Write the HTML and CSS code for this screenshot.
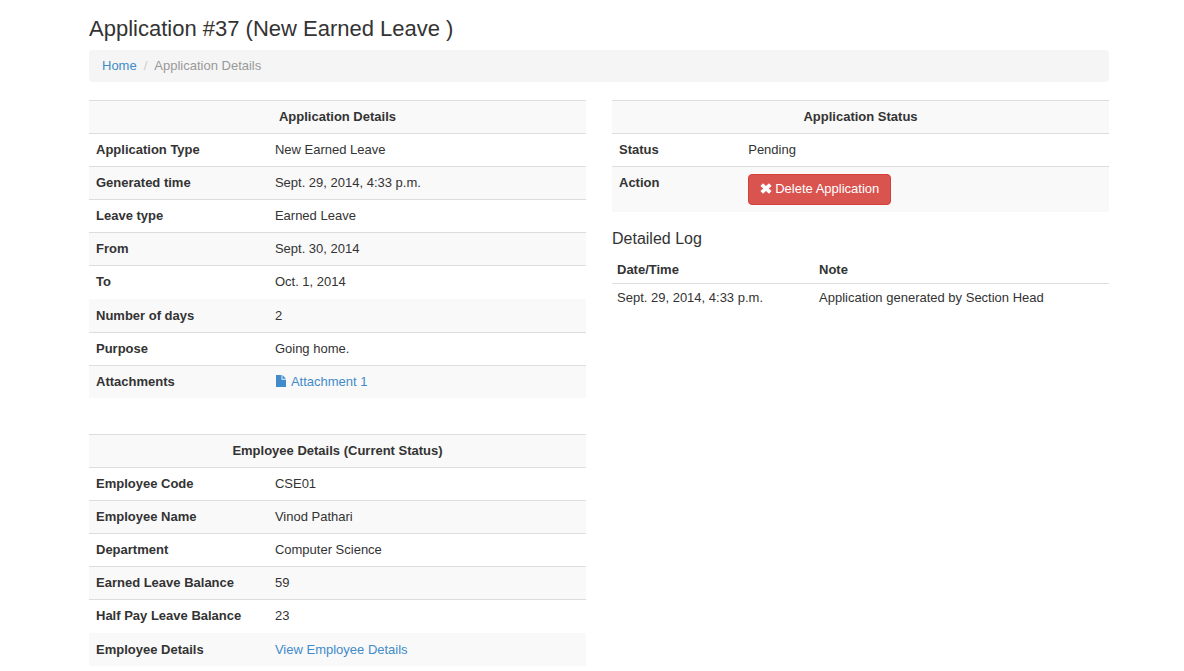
FILE: index.html
```html
<!DOCTYPE html>
<html lang="en">
<head>
<meta charset="utf-8">
<meta name="viewport" content="width=device-width, initial-scale=1">
<title>Application #37</title>
<link rel="stylesheet" href="styles.css">
</head>
<body>
<main class="container">
  <h1 class="page-title">Application #37 (New Earned Leave )</h1>
  <nav aria-label="Breadcrumb">
    <ol class="breadcrumb">
      <li><a href="#">Home</a></li>
      <li class="active">Application Details</li>
    </ol>
  </nav>
  <div class="columns">
    <div class="column">
      <table class="details">
        <thead><tr><th colspan="2">Application Details</th></tr></thead>
        <tbody>
          <tr><th scope="row">Application Type</th><td>New Earned Leave</td></tr>
          <tr><th scope="row">Generated time</th><td>Sept. 29, 2014, 4:33 p.m.</td></tr>
          <tr><th scope="row">Leave type</th><td>Earned Leave</td></tr>
          <tr><th scope="row">From</th><td>Sept. 30, 2014</td></tr>
          <tr><th scope="row">To</th><td>Oct. 1, 2014</td></tr>
          <tr class="no-rule"><th scope="row">Number of days</th><td>2</td></tr>
          <tr><th scope="row">Purpose</th><td>Going home.</td></tr>
          <tr><th scope="row">Attachments</th><td><a href="#"><svg class="icon-file" viewBox="0 0 10 12" aria-hidden="true"><path fill="currentColor" d="M0 0h5.5v4.7H10V12H0zM6.4 0 10 3.8H6.4z"/></svg>Attachment 1</a></td></tr>
        </tbody>
      </table>
      <table class="details">
        <thead><tr><th colspan="2">Employee Details (Current Status)</th></tr></thead>
        <tbody>
          <tr><th scope="row">Employee Code</th><td>CSE01</td></tr>
          <tr><th scope="row">Employee Name</th><td>Vinod Pathari</td></tr>
          <tr><th scope="row">Department</th><td>Computer Science</td></tr>
          <tr><th scope="row">Earned Leave Balance</th><td>59</td></tr>
          <tr><th scope="row">Half Pay Leave Balance</th><td>23</td></tr>
          <tr class="no-rule"><th scope="row">Employee Details</th><td><a href="#">View Employee Details</a></td></tr>
        </tbody>
      </table>
    </div>
    <div class="column">
      <table class="details status">
        <thead><tr><th colspan="2">Application Status</th></tr></thead>
        <tbody>
          <tr><th scope="row">Status</th><td>Pending</td></tr>
          <tr><th scope="row">Action</th><td><button class="btn-danger" type="button"><svg class="icon-remove" viewBox="0 0 12 12" aria-hidden="true"><path fill="currentColor" d="M3 .3 6 3.1 9 .3 11.6 2.9 8.7 5.5l2.9 2.6L9 10.7 6 7.9 3 10.7.4 8.1l2.9-2.6L.4 2.9z"/></svg>Delete Application</button></td></tr>
        </tbody>
      </table>
      <section>
        <h2 class="log-title">Detailed Log</h2>
        <table class="log">
          <thead><tr><th scope="col">Date/Time</th><th scope="col">Note</th></tr></thead>
          <tbody><tr><td>Sept. 29, 2014, 4:33 p.m.</td><td>Application generated by Section Head</td></tr></tbody>
        </table>
      </section>
    </div>
  </div>
</main>
</body>
</html>
```
FILE: styles.css
```css
* { box-sizing: border-box; }

body {
  margin: 0;
  background: #fff;
  color: #333;
  font: 13px/18px "Liberation Sans", Arial, sans-serif;
}

a { color: #428bca; text-decoration: none; }
a:hover { text-decoration: underline; }

.container { padding: 16px 75px 0 89px; }

.page-title {
  margin: 0 0 9px;
  font-size: 22px;
  font-weight: 400;
  line-height: 25px;
}

.breadcrumb {
  display: flex;
  margin: 0 0 18px;
  padding: 7px 13px;
  list-style: none;
  background: #f5f5f5;
  border-radius: 4px;
}
.breadcrumb li + li::before {
  content: "/";
  padding: 0 7px;
  color: #ccc;
}
.breadcrumb .active { color: #999; }

.columns {
  display: grid;
  grid-template-columns: 1fr 1fr;
  gap: 26px;
}
.column { min-width: 0; }

table {
  width: 100%;
  table-layout: fixed;
  border-spacing: 0;
}
th, td { text-align: left; vertical-align: top; }

.details { margin-bottom: 36px; table-layout: auto; }
.details th, .details td {
  padding: 7px;
  border-top: 1px solid #ddd;
  background-clip: padding-box;
}
.details thead th { text-align: center; }
.details tbody th { width: 36%; }
.details thead th,
.details tbody tr:nth-child(even) > * { background-color: #f9f9f9; }
.details .no-rule > * {
  border-top-color: transparent;
  padding-top: 8px;
}

.status { margin-bottom: 18px; }
.status tbody th { width: 26%; }

.icon-file {
  width: 10px;
  height: 12px;
  margin: 0 5px 0 1px;
  vertical-align: -1px;
}

.btn-danger {
  display: flex;
  align-items: center;
  gap: 3px;
  padding: 5px 11px 6px;
  border: 1px solid #d43f3a;
  border-radius: 4px;
  background: #d9534f;
  color: #fff;
  font: inherit;
  cursor: pointer;
}
.icon-remove { width: 12px; height: 12px; }

.log-title {
  margin: 0 0 8px;
  font-size: 16px;
  font-weight: 400;
  line-height: 18px;
}
.log th, .log td { padding: 5px; }
.log th { padding-bottom: 4px; border-bottom: 1px solid #ddd; }
.log th:first-child { width: 202px; }
```
